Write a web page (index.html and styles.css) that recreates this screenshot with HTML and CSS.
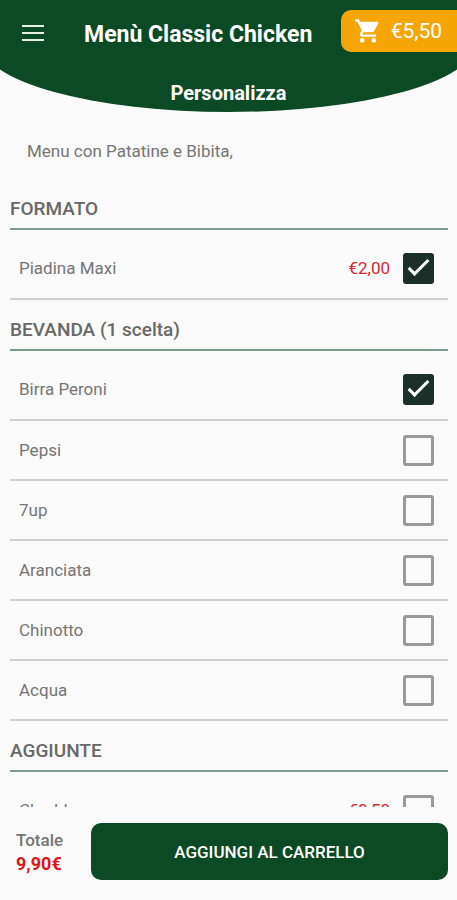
FILE: index.html
```html
<!DOCTYPE html>
<html lang="it">
<head>
    <meta charset="UTF-8">
    <meta name="viewport" content="width=device-width, initial-scale=1.0">
    <title>Menù Classic Chicken - Personalizza</title>
    <link rel="stylesheet" href="styles.css">
</head>
<body>
    <header class="header">
        <div class="top-bar">
            <button class="menu-button" type="button" aria-label="Apri menu">
                <svg width="22" height="16" viewBox="0 0 22 16" fill="#e9f0e8">
                    <rect y="0" width="22" height="2"/>
                    <rect y="7" width="22" height="2"/>
                    <rect y="14" width="22" height="2"/>
                </svg>
            </button>
            <h1>Menù Classic Chicken</h1>
            <a class="cart" href="#">
                <svg width="28" height="28" viewBox="0 0 24 24" fill="#fff" aria-hidden="true">
                    <path d="M7 18c-1.100 0-1.990.9-1.990 2S5.900 22 7 22s2-.9 2-2-.9-2-2-2zM1 2v2h2l3.600 7.590-1.350 2.450c-.16.280-.25.610-.25.960 0 1.100.9 2 2 2h12v-2H7.420c-.14 0-.25-.11-.25-.25l.03-.12.900-1.630h7.450c.75 0 1.410-.41 1.750-1.030l3.580-6.490c.08-.14.120-.31.120-.48 0-.55-.45-1-1-1H5.210l-.94-2H1zm16 16c-1.100 0-1.990.9-1.990 2s.89 2 1.990 2 2-.9 2-2-.9-2-2-2z"/>
                </svg>
                <span>€5,50</span>
            </a>
        </div>
        <h2>Personalizza</h2>
    </header>

    <main class="content">
        <p class="description">Menu con Patatine e Bibita,</p>

        <section>
            <h3>FORMATO</h3>
            <label class="option">
                <span class="name">Piadina Maxi</span>
                <span class="price">€2,00</span>
                <input type="checkbox" checked>
            </label>
        </section>

        <section>
            <h3>BEVANDA (1 scelta)</h3>
            <label class="option">
                <span class="name">Birra Peroni</span>
                <input type="checkbox" checked>
            </label>
            <label class="option">
                <span class="name">Pepsi</span>
                <input type="checkbox">
            </label>
            <label class="option">
                <span class="name">7up</span>
                <input type="checkbox">
            </label>
            <label class="option">
                <span class="name">Aranciata</span>
                <input type="checkbox">
            </label>
            <label class="option">
                <span class="name">Chinotto</span>
                <input type="checkbox">
            </label>
            <label class="option">
                <span class="name">Acqua</span>
                <input type="checkbox">
            </label>
        </section>

        <section>
            <h3>AGGIUNTE</h3>
            <label class="option">
                <span class="name">Cheddar</span>
                <span class="price">€0,50</span>
                <input type="checkbox">
            </label>
        </section>
    </main>

    <footer class="footer">
        <div class="total">
            <span>Totale</span>
            <strong>9,90€</strong>
        </div>
        <button class="add-button" type="button">AGGIUNGI AL CARRELLO</button>
    </footer>
</body>
</html>
```
FILE: styles.css
```css
*, *::before {
    box-sizing: border-box;
}
body {
    display: flex;
    flex-direction: column;
    height: 100vh;
    margin: 0;
    overflow: hidden;
    background-color: #fafafa;
    color: #757575;
    font-family: Roboto, sans-serif;
    font-size: 17px;
}
h1, h2, h3, p {
    margin: 0;
}

/* Header */
.header {
    position: relative;
    flex: none;
    padding: 10px 0 7px;
    overflow: hidden;
    color: white;
}
/* green background with the curved bottom */
.header::before {
    content: "";
    position: absolute;
    z-index: -1;
    left: -4%;
    right: -4%;
    top: -24px;
    bottom: 0;
    background-color: #0c4a26;
    border-radius: 0 0 50% 50% / 0 0 68px 68px;
}
.top-bar {
    display: flex;
    align-items: center;
    height: 42px;
}
.menu-button {
    display: flex;
    padding: 4px 0 0;
    margin-left: 22px;
    border: none;
    background: none;
    cursor: pointer;
}
h1 {
    flex: 1;
    margin-left: 40px;
    padding-top: 8px;
    font-size: 23px;
    font-weight: 700;
    line-height: 32px;
    white-space: nowrap;
}
.cart {
    display: flex;
    align-items: center;
    gap: 9px;
    height: 42px;
    padding: 0 15px 0 13px;
    border-radius: 10px 0 0 10px;
    background-color: #f5a506;
    color: white;
    font-size: 21px;
    text-decoration: none;
}
h2 {
    margin-top: 29px;
    font-size: 20px;
    font-weight: 700;
    line-height: 24px;
    text-align: center;
}

/* Options */
.content {
    flex: 1;
    min-height: 0;
    padding: 0 9px 0 10px;
    overflow-y: auto;
    scrollbar-width: none;
}
.description {
    padding: 28px 17px 27px;
    line-height: 22px;
}
h3 {
    height: 51px;
    padding-top: 18px;
    border-bottom: 2px solid #7b9c8b;
    color: #686868;
    font-size: 19px;
    font-weight: 500;
    line-height: 24px;
}
section:first-of-type h3 {
    height: 41px;
    padding-top: 8px;
}
.option {
    display: flex;
    align-items: center;
    height: 60px;
    padding: 0 14px 0 9px;
    border-bottom: 2px solid #d0d0d0;
    cursor: pointer;
}
h3 + .option {
    height: 70px;
    padding-top: 8px;
}
.name {
    flex: 1;
}
.price {
    margin-right: 13px;
    color: #d9272e;
}
input {
    appearance: none;
    width: 31px;
    height: 31px;
    margin: 0;
    border: 3px solid #999;
    border-radius: 3px;
    cursor: pointer;
}
input:checked {
    border: none;
    background-color: #1b3028;
}
input:checked::before {
    content: "";
    display: block;
    width: 21px;
    height: 10px;
    margin: 7px 0 0 5px;
    border: solid white;
    border-width: 0 0 3px 3px;
    transform: rotate(-45deg);
}

/* Footer */
.footer {
    display: flex;
    flex: none;
    align-items: center;
    gap: 28px;
    padding: 16px 9px 20px 16px;
}
.total {
    display: flex;
    flex-direction: column;
    font-weight: 500;
    line-height: 24px;
}
.total strong {
    color: #dc1717;
    font-size: 18px;
}
.add-button {
    flex: 1;
    height: 57px;
    border: none;
    border-radius: 10px;
    background-color: #0c4a26;
    color: white;
    font-family: inherit;
    font-size: 17px;
    font-weight: 500;
    cursor: pointer;
}
```
